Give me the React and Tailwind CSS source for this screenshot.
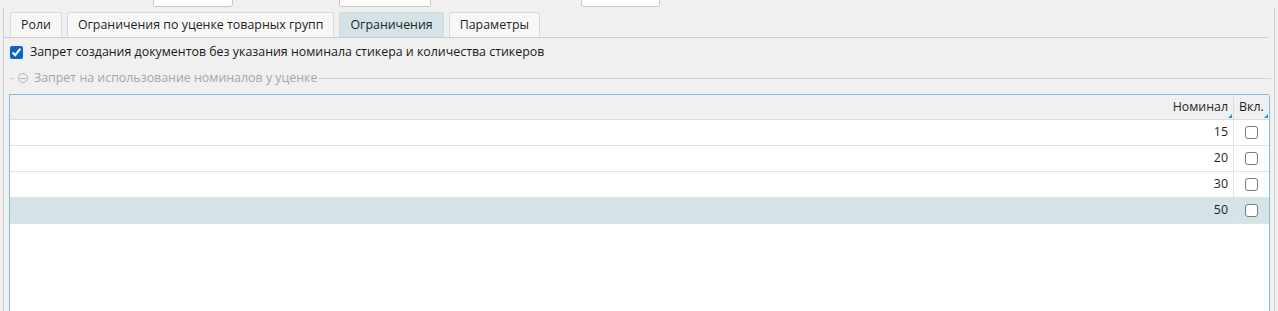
const rows = [
  { value: 15 },
  { value: 20 },
  { value: 30 },
  { value: 50, selected: true },
];

function Corner() {
  return (
    <svg width="4" height="4" viewBox="0 0 4 4" className="absolute right-[1px] bottom-[1px]">
      <path d="M4 0 L4 4 L0 4 Z" fill="#2d8fd0" />
    </svg>
  );
}

function Tab({ label, active }) {
  return (
    <div
      className={
        "h-[25px] px-[10px] flex items-center border border-b-0 border-[#d9d9d9] rounded-t-[3px] text-[12.4px] text-[#1f1f1f] " +
        (active ? "bg-[#d3e3e8]" : "bg-[#f7f7f7]")
      }
    >
      {label}
    </div>
  );
}

export default function App() {
  return (
    <div
      className="w-[1278px] h-[311px] bg-[#f0f0f0] overflow-hidden relative"
      style={{ fontFamily: '"Open Sans", "Noto Sans", sans-serif' }}
    >
      {/* cut-off toolbar row */}
      <div className="h-[8px] relative">
        <div className="absolute left-[153px] top-[-12px] w-[80px] h-[19px] bg-white border border-[#c8c8c8] rounded-[3px]" />
        <div className="absolute left-[339px] top-[-12px] w-[92px] h-[19px] bg-white border border-[#c8c8c8] rounded-[3px]" />
        <div className="absolute left-[581px] top-[-12px] w-[79px] h-[19px] bg-white border border-[#c8c8c8] rounded-[3px]" />
      </div>

      <div className="mx-[3px] border-x border-[#cfcfcf] h-[303px] flex flex-col">
        {/* tabs */}
        <div className="flex gap-[5px] pl-[6px] pt-[4px] border-b border-[#cdcdcd] mr-[6px]">
          <Tab label="Роли" />
          <Tab label="Ограничения по уценке товарных групп" />
          <Tab label="Ограничения" active />
          <Tab label="Параметры" />
        </div>

        <div className="flex items-center gap-[7px] pl-[6px] mt-[7px] h-[14px]">
          <input type="checkbox" defaultChecked className="w-[13px] h-[13px] m-0 accent-[#0a64c8]" />
          <span className="text-[12.4px] text-[#1a1a1a]">
            Запрет создания документов без указания номинала стикера и количества стикеров
          </span>
        </div>

        <div className="flex items-center mt-[11px] h-[16px] pl-[6px] pr-[3px]">
          <div className="w-[4px] h-px bg-[#c8c8c8]" />
          <div className="ml-[4px] w-[10px] h-[10px] rounded-full border border-[#b4b4b4] flex items-center justify-center">
            <div className="w-[6px] h-px bg-[#b4b4b4]" />
          </div>
          <span className="ml-[6px] text-[12.4px] text-[#a6a6a6]">Запрет на использование номиналов у уценке</span>
          <div className="flex-1 ml-[2px] h-px bg-[#d2d2d2]" />
        </div>

        <div className="ml-[5px] mr-[4px] mt-[8px] flex-1 bg-white border-l border-t border-r border-[#7fc0dc] rounded-tr-[3px] flex flex-col">
          <div className="h-[25px] bg-[#f1f1f1] border-b border-[#dcdcdc] flex text-[12.4px] text-[#1f1f1f]">
            <div className="flex-1 relative flex items-center justify-end pr-[5px] border-r border-[#dcdcdc]">
              Номинал
              <Corner />
            </div>
            <div className="w-[35px] relative flex items-center pl-[5px]">
              Вкл.
              <Corner />
            </div>
          </div>
          {rows.map((r) => (
            <div
              key={r.value}
              className={
                "h-[26px] border-b border-[#e3e3e3] flex text-[12.4px] text-[#1f1f1f] " +
                (r.selected ? "bg-[#d4e4e9]" : "bg-white")
              }
            >
              <div className="flex-1 flex items-center justify-end pr-[5px] border-r border-[#e3e3e3]">{r.value}</div>
              <div className="w-[35px] flex items-center justify-center">
                <div className="w-[13px] h-[13px] bg-white border border-[#7a7a7a] rounded-[3px]" />
              </div>
            </div>
          ))}
        </div>
      </div>
    </div>
  );
}
